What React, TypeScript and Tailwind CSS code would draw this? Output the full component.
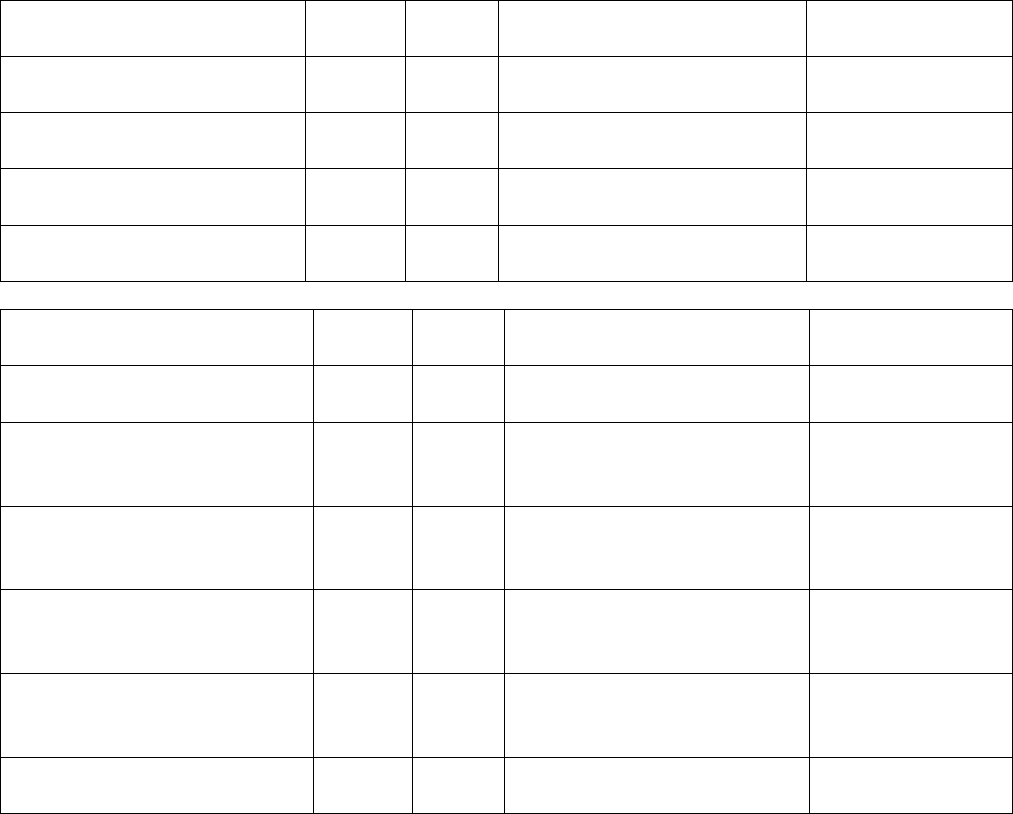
const firstRows = ["h-[56px]", "h-[56px]", "h-[56px]", "h-[57px]", "h-[56px]"];
const secondRows = ["h-[56px]", "h-[57px]", "h-[84px]", "h-[83px]", "h-[84px]", "h-[84px]", "h-[56px]"];

function Grid({ cols, rows }: { cols: string; rows: string[] }) {
  return (
    <div className={`grid ${cols} border-l border-t border-black`}>
      {rows.map((h, r) =>
        [0, 1, 2, 3, 4].map((c) => (
          <div key={`${r}-${c}`} className={`${h} border-r border-b border-black`}></div>
        ))
      )}
    </div>
  );
}

function App() {
  return (
    <div className="w-[1013px] bg-white" style={{ fontFamily: '"Liberation Sans", sans-serif' }}>
      <Grid cols="grid-cols-[305px_100px_93px_308px_206px]" rows={firstRows} />
      <div className="h-[27px]"></div>
      <Grid cols="grid-cols-[313px_99px_92px_305px_203px]" rows={secondRows} />
    </div>
  );
}

export default App;
